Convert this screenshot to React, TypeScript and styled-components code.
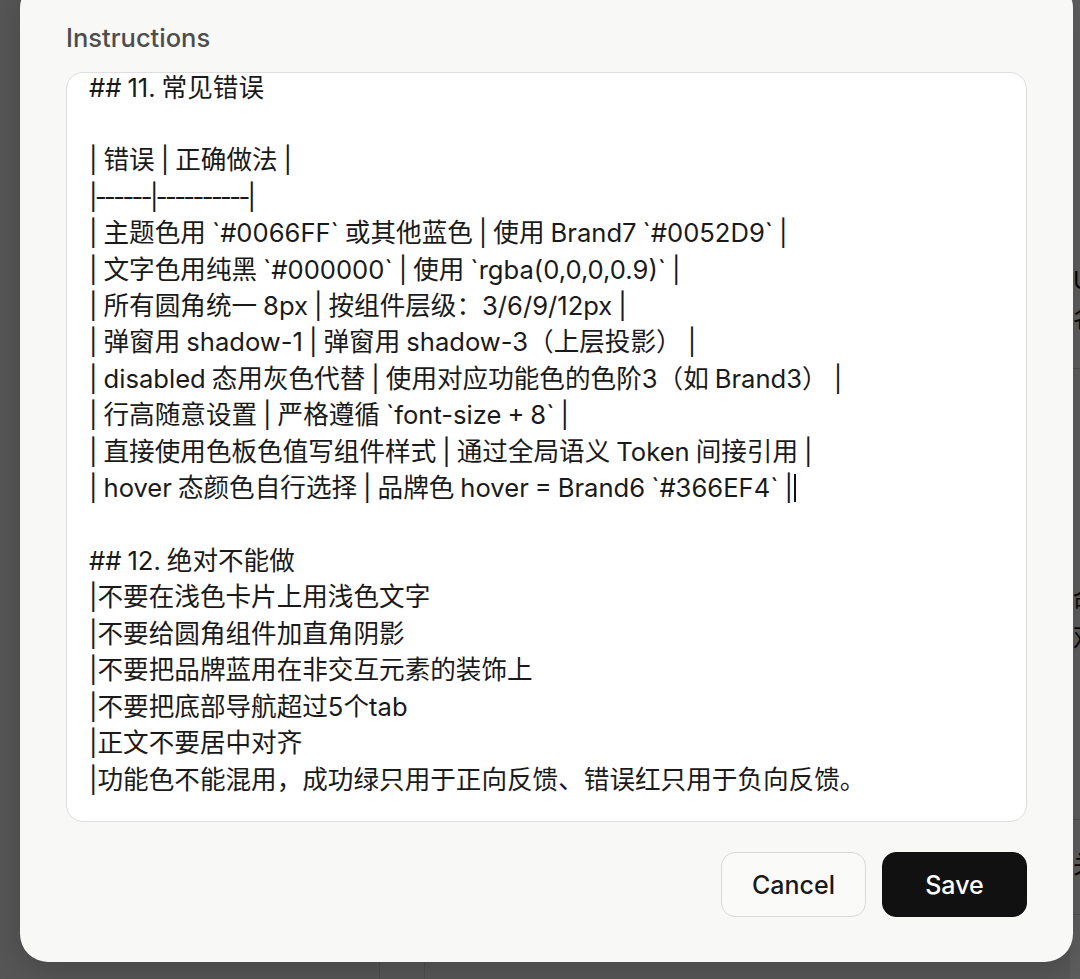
import React from "react";
import styled, { createGlobalStyle } from "styled-components";

const Global = createGlobalStyle`
  html, body { margin: 0; padding: 0; }
  body {
    width: 1080px;
    height: 979px;
    overflow: hidden;
    font-family: Inter, "Noto Sans CJK SC", "Noto Sans", sans-serif;
  }
`;

const Page = styled.div`
  position: relative;
  width: 1080px;
  height: 979px;
  overflow: hidden;
  background: #ebebeb;
`;

const Behind = styled.div`
  display: grid;
  grid-template-columns: 380px 45px 1fr;
  height: 100%;
`;

const LeftPanel = styled.div`
  background: #e9e9e9;
  border-right: 1px solid #cfcfcf;
`;

const NarrowPanel = styled.div`
  background: #ebebeb;
  border-right: 1px solid #d2d2d2;
`;

const MainPanel = styled.div`
  display: grid;
  grid-template-columns: 645px 300px;
  background: #ececec;
`;

const MainArea = styled.div``;

const SideBar = styled.div`
  background: #ffffff;
  display: flex;
  flex-direction: column;
  padding-top: 262px;
  font-size: 24px;
  color: #111;
`;

const SideLine = styled.div<{ $gap?: number }>`
  height: 38px;
  line-height: 38px;
  padding-left: 3px;
  margin-bottom: ${(p) => p.$gap ?? 0}px;
  white-space: nowrap;
`;

const SideRule = styled.div<{ $gap?: number }>`
  height: 1px;
  background: #dcdcdc;
  margin-bottom: ${(p) => p.$gap ?? 0}px;
`;

const Dim = styled.div`
  position: absolute;
  inset: 0;
  background: rgba(0, 0, 0, 0.63);
`;

const Modal = styled.div`
  position: absolute;
  left: 20px;
  top: -20px;
  width: 1053px;
  box-sizing: border-box;
  padding: 43px 46px 45px;
  background: #f8f8f7;
  border-radius: 28px;
  box-shadow: 0 8px 30px rgba(0, 0, 0, 0.18);
  display: flex;
  flex-direction: column;
`;

const Label = styled.div`
  height: 30px;
  line-height: 30px;
  font-size: 25.5px;
  font-weight: 500;
  color: #4d4d4d;
  margin-bottom: 19px;
`;

const TextArea = styled.div`
  height: 750px;
  box-sizing: border-box;
  background: #ffffff;
  border: 1.5px solid #dedede;
  border-radius: 17px;
  padding: 0 22px;
  overflow: hidden;
`;

const TextBody = styled.div`
  margin-top: -3.5px;
  font-size: 25.6px;
  line-height: 36.42px;
  word-spacing: -1.2px;
  color: #1a1a1a;
  white-space: pre;
`;

const Dashes = styled.span`
  letter-spacing: -2.6px;
`;

const Caret = styled.span`
  display: inline-block;
  width: 2px;
  height: 28px;
  background: #111;
  vertical-align: -5px;
  margin-left: 1px;
`;

const Footer = styled.div`
  display: flex;
  justify-content: flex-end;
  gap: 16px;
  margin-top: 30px;
`;

const Button = styled.button<{ $primary?: boolean }>`
  width: 145px;
  height: 65px;
  box-sizing: border-box;
  border-radius: 14px;
  font-family: Inter, "Noto Sans", sans-serif;
  font-size: 25px;
  font-weight: 500;
  cursor: pointer;
  border: 1.5px solid ${(p) => (p.$primary ? "#111111" : "#d8d8d6")};
  background: ${(p) => (p.$primary ? "#111111" : "#fafaf9")};
  color: ${(p) => (p.$primary ? "#ffffff" : "#1a1a1a")};
`;

const head = ["## 11. 常见错误", "", "| 错误 | 正确做法 |"];

const lines = [
  "| 主题色用 `#0066FF` 或其他蓝色 | 使用 Brand7 `#0052D9` |",
  "| 文字色用纯黑 `#000000` | 使用 `rgba(0,0,0,0.9)` |",
  "| 所有圆角统一 8px | 按组件层级：3/6/9/12px |",
  "| 弹窗用 shadow-1 | 弹窗用 shadow-3（上层投影） |",
  "| disabled 态用灰色代替 | 使用对应功能色的色阶3（如 Brand3） |",
  "| 行高随意设置 | 严格遵循 `font-size + 8` |",
  "| 直接使用色板色值写组件样式 | 通过全局语义 Token 间接引用 |",
];

const tail = [
  "",
  "## 12. 绝对不能做",
  "|不要在浅色卡片上用浅色文字",
  "|不要给圆角组件加直角阴影",
  "|不要把品牌蓝用在非交互元素的装饰上",
  "|不要把底部导航超过5个tab",
  "|正文不要居中对齐",
  "|功能色不能混用，成功绿只用于正向反馈、错误红只用于负向反馈。",
];

export default function App() {
  return (
    <>
      <Global />
      <Page>
        <Behind>
          <LeftPanel />
          <NarrowPanel />
          <MainPanel>
            <MainArea />
            <SideBar>
              <SideLine>U</SideLine>
              <SideLine $gap={30}>名</SideLine>
              <SideRule $gap={212} />
              <SideLine>命</SideLine>
              <SideLine $gap={162}>双</SideLine>
              <SideRule $gap={26} />
              <SideLine $gap={30}>关</SideLine>
              <SideRule />
            </SideBar>
          </MainPanel>
        </Behind>
        <Dim />
        <Modal role="dialog">
          <Label>Instructions</Label>
          <TextArea>
            <TextBody>
              {head.join("\n") + "\n"}
              <Dashes>|------|----------</Dashes>|
              {"\n" + lines.join("\n")}
              {"\n| hover 态颜色自行选择 | 品牌色 hover = Brand6 `#366EF4` |"}
              <Caret />
              {"\n" + tail.join("\n")}
            </TextBody>
          </TextArea>
          <Footer>
            <Button>Cancel</Button>
            <Button $primary>Save</Button>
          </Footer>
        </Modal>
      </Page>
    </>
  );
}
